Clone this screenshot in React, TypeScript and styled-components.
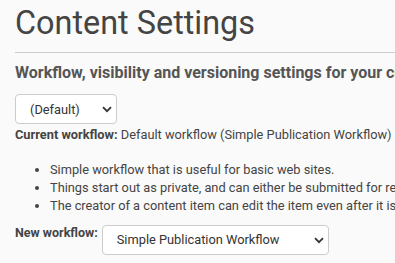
import React from "react";
import styled, { createGlobalStyle } from "styled-components";

const Global = createGlobalStyle`
  html, body { margin: 0; padding: 0; background: #fafafa; }
  body { font-family: Roboto, "Liberation Sans", sans-serif; color: #444; overflow: hidden; }
`;

const Page = styled.div`
  padding: 6px 0 0 15px;
  width: 700px;
`;

const Title = styled.h1`
  margin: 0;
  font-size: 32.4px;
  font-weight: 400;
  line-height: 35px;
  color: #444;
`;

const Rule = styled.hr`
  margin: 11px 0 0;
  border: 0;
  border-top: 1px solid #ccc;
`;

const Subheading = styled.h2`
  margin: 9.5px 0 0;
  font-size: 16px;
  font-weight: 700;
  line-height: 20px;
  color: #555;
  white-space: nowrap;
`;

const SelectBox = styled.select<{ $w: number }>`
  appearance: none;
  -webkit-appearance: none;
  box-sizing: border-box;
  display: block;
  width: ${(p) => p.$w}px;
  height: 30px;
  margin: 0;
  border: 1px solid #ccc;
  border-radius: 4px;
  background: #fff;
  font-family: Roboto, "Liberation Sans", sans-serif;
  font-size: 12.8px;
  color: #333;
  padding: 0 24px 0 14px;
`;

const SelectWrap = styled.div`
  position: relative;
  display: flex;
`;

const Chevron = styled.svg`
  position: absolute;
  right: 5px;
  top: 12px;
  pointer-events: none;
`;

const Field = styled.div`
  margin-top: 11.5px;
  display: flex;
`;

const Current = styled.div`
  margin-top: 2.5px;
  font-size: 12.8px;
  line-height: 16px;
  white-space: nowrap;
`;

const Bold = styled.b`
  font-weight: 700;
`;

const List = styled.ul`
  margin: 18px 0 0;
  padding-left: 35px;
  font-size: 12.8px;
  line-height: 18px;
  white-space: nowrap;
`;

const Row = styled.div`
  margin-top: 10.4px;
  display: flex;
  align-items: flex-start;
  gap: 4px;
`;

const Label = styled.label`
  font-size: 12.5px;
  font-weight: 700;
  line-height: 16px;
`;

function Select({ w, value }: { w: number; value: string }) {
  return (
    <SelectWrap>
      <SelectBox $w={w} defaultValue={value}>
        <option>{value}</option>
      </SelectBox>
      <Chevron width="10" height="7" viewBox="0 0 10 7">
        <path d="M1 1.2 L5 5.2 L9 1.2" fill="none" stroke="#333" strokeWidth="1.8" />
      </Chevron>
    </SelectWrap>
  );
}

export default function App() {
  return (
    <Page>
      <Global />
      <Title>Content Settings</Title>
      <Rule />
      <Subheading>Workflow, visibility and versioning settings for your content types</Subheading>
      <Field>
        <Select w={102} value="(Default)" />
      </Field>
      <Current>
        <Bold>Current workflow:</Bold> Default workflow (Simple Publication Workflow)
      </Current>
      <List>
        <li>Simple workflow that is useful for basic web sites.</li>
        <li>Things start out as private, and can either be submitted for review, or published directly.</li>
        <li>The creator of a content item can edit the item even after it is published.</li>
      </List>
      <Row>
        <Label>New workflow:</Label>
        <Select w={227} value="Simple Publication Workflow" />
      </Row>
    </Page>
  );
}
